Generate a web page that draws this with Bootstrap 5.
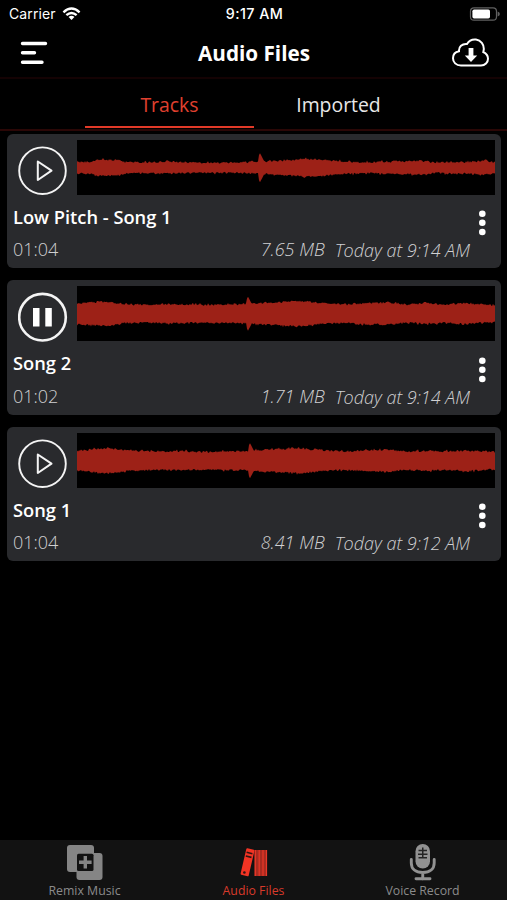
<!DOCTYPE html>
<html lang="en" data-bs-theme="dark">
<head>
<meta charset="utf-8">
<meta name="viewport" content="width=device-width, initial-scale=1">
<title>Audio Files</title>
<link href="https://cdn.jsdelivr.net/npm/bootstrap@5.3.0/dist/css/bootstrap.min.css" rel="stylesheet">
<style>
body{background:#000;color:#fff;font-family:"Open Sans",sans-serif;height:900px;overflow:hidden}
svg{display:block;flex:none}
.status{height:27px;font:14px/27px Inter,sans-serif;padding:0 7px 0 9px}
.status .clock{font-weight:500;font-size:14.3px;letter-spacing:.45px}
.status .carrier{letter-spacing:.1px}
.status .carrier span{margin-right:6px}
.status>*{flex:1 1 0}
.topbar{height:52px;padding:2px 17px 0 20px;border-bottom:2px solid #140203}
.topbar h1{font-size:20.7px;font-weight:700;line-height:48px}
.tabs{height:51.5px;padding:0 84px 0 85px;border-bottom:2px solid #2b0706}
.tabs a{font-size:19.4px;line-height:52.5px;height:49px;flex:1 1 0;color:#e8e8e8;border-bottom:2.5px solid transparent}
.tabs a.active{color:#e0402f;border-color:#e23a28}
.tracks{padding:3.2px 6px 0 7px}
.track{height:134.4px;margin-bottom:12.2px;background:#292a2d;border:0;border-radius:6px;padding:6.2px 6px 0}
.play{width:64px;height:55px}
.play svg{margin:6px 0 0 5px}
.wave{width:418px;height:55px;background:#000}
.info{padding-top:9.8px}
.name{font-size:18.3px;font-weight:600;line-height:24px;margin-bottom:8.6px}
.meta{font-size:18px;font-weight:300;line-height:24px;color:#d0d0d2;margin-right:-1px}
.meta .when{margin-left:10px;position:relative;top:1px}
.menu{width:26px;padding:5.6px 0 0 9px}
.bottombar{height:60px;background:#121212}
.bottombar a{flex:1 1 0;font-size:12.3px;line-height:16px;color:#8b8b8b}
.bottombar a.active{color:#d93a2b}
.bottombar svg{margin:4px auto 2px}
</style>
</head>
<body class="d-flex flex-column">
<div class="status d-flex">
  <div class="carrier d-flex align-items-center"><span>Carrier</span>
    <svg width="19" height="14" viewBox="0 0 20 14" fill="none" stroke="#fff" stroke-width="2.5"><path d="M1.500 5.200Q10-2.600 18.500 5.200M4.600 8.300Q10 3.400 15.400 8.300"/><path d="M6.900 10.200Q10 7.600 13.100 10.200L10 13.400Z" fill="#fff" stroke="none"/></svg>
  </div>
  <div class="clock text-center">9:17 AM</div>
  <div class="d-flex align-items-center justify-content-end">
    <svg width="31" height="14" viewBox="0 0 31 14"><rect x="1.500" y=".8" width="26" height="12.400" rx="3.500" fill="none" stroke="#606060" stroke-width="1.200"/><rect x="3.400" y="2.500" width="17.600" height="9" rx="1.700" fill="#fff"/><path d="M28.600 4.600q2.300.7 2.300 2.400T28.600 9.400z" fill="#606060"/></svg>
  </div>
</div>
<header class="topbar d-flex justify-content-between align-items-center">
  <svg width="37" height="24" viewBox="0 0 37 24" stroke="#fff" stroke-width="3.400" stroke-linecap="round"><path d="M2.500 2.500H25.500M2.500 11.700H14.500M2.500 21.200H22"/></svg>
  <h1 class="m-0">Audio Files</h1>
  <svg width="39" height="30" viewBox="0 0 39 30" fill="none" stroke="#fff" stroke-width="2"><path d="M10 27.500C5 27.500 2 24.200 2 20.200C2 16.500 4.500 13.800 8 13.200C7.600 9 11 5.500 16 6C18 2.700 21.300 1.200 25 1.600C30 2.200 33 6.300 32.800 11.200C32.700 12.200 32.600 13.200 32.300 14C35.500 15.500 37 18 37 20.700C37 24.500 34 27.500 30 27.500Z"/><path d="M17.600 10h4.800v7.500h3.800l-6.200 6.500l-6.200-6.500h3.800z" fill="#fff" stroke="none"/></svg>
</header>
<nav class="tabs d-flex text-center">
  <a class="active text-decoration-none">Tracks</a>
  <a class="text-decoration-none">Imported</a>
</nav>
<main class="tracks flex-grow-1" id="tracks"></main>
<nav class="bottombar d-flex text-center">
  <a class="text-decoration-none">
    <svg width="38" height="37" viewBox="0 0 38 37" fill="#858585"><rect x="1" y="1" width="27" height="27" rx="3"/><rect x="10.500" y="9" width="26" height="27" rx="3"/><rect x="11" y="9.700" width="16.500" height="17.300" rx="1.500" fill="#121212"/><path d="M17.600 12h3.400v4.600h4.600v3.400h-4.600v4.600h-3.400v-4.600h-4.600v-3.400h4.600z"/></svg>Remix Music</a>
  <a class="active text-decoration-none">
    <svg width="30" height="37" viewBox="0 0 30 37"><path d="M8.500 4.200L14.800 5.700Q15.600 6 15.400 7L9.700 31.500Q9.400 32.600 8.500 32.300L2.200 30.800Q1.400 30.500 1.600 29.500L7.300 5Q7.600 4 8.500 4.200Z" fill="#f33424"/><path d="M7.600 8.300l5.800 1.500M6.800 12l5.700 1.400" stroke="#301412" stroke-width="1.600"/><circle cx="5.400" cy="28.500" r="1.300" fill="#301412"/><path d="M15.500 6H28V32H15.500Z" fill="#a92b20"/><path d="M16.300 6v26M20.200 6v26M24 6v26M27.500 6v26" stroke="#e83828" stroke-width="1.200"/></svg>Audio Files</a>
  <a class="text-decoration-none">
    <svg width="28" height="37" viewBox="0 0 28 37"><rect x="6.500" y="0" width="14.500" height="24.500" rx="7.200" fill="#929292"/><path d="M9.500 6.500h3.500M14.500 6.500h3.500M9 10.200h4M14.500 10.200h4M9.500 13.800h3.500M14.500 13.800h3.500M13.750 3.500v11" stroke="#242424" stroke-width="1.500"/><path d="M2.300 15.500v3.500C2.300 25 6.500 28.500 13.750 28.500S25.200 25 25.200 19V15.500M13.750 29v6M7 34.800h14" fill="none" stroke="#929292" stroke-width="2.900" stroke-linecap="round"/></svg>Voice Record</a>
</nav>
<script src="https://cdn.jsdelivr.net/npm/bootstrap@5.3.0/dist/js/bootstrap.bundle.min.js"></script>
<script>
// envelope: pairs of [x, half height] along the 418px wide waveform
const tracks = [
  {name:'Low Pitch - Song 1', time:'01:04', size:'7.65 MB', when:'Today at 9:14 AM', mid:27.7, spike:183, peak:14.5,
   env:[[0,5.5],[14,6],[22,8],[35,7.5],[40,8],[48,5.7],[75,5.3],[87,6],[105,5.5],[125,5],[160,5],[182,6],[195,6.3],[215,8],[237,8.7],[255,7],[270,6],[290,5.3],[320,6.3],[345,6.7],[360,5],[375,6],[390,5.5],[405,7],[418,5.5]]},
  {name:'Song 2', time:'01:02', size:'1.71 MB', when:'Today at 9:14 AM', paused:true, mid:27.7, spike:171, peak:17,
   env:[[0,10],[15,11.5],[32,12],[45,9.5],[70,9],[98,9.5],[130,8.7],[170,9.7],[190,11],[221,12.5],[240,10.7],[269,9],[280,10],[310,11],[330,9],[350,10],[365,9],[390,10.3],[418,8]]},
  {name:'Song 1', time:'01:04', size:'8.41 MB', when:'Today at 9:12 AM', mid:27.7, spike:173, peak:17.5,
   env:[[0,9.5],[15,11],[23,12.3],[37,12],[50,10],[80,9],[105,9.5],[130,8.7],[170,9.7],[190,11],[221,12.5],[240,10.7],[269,9],[285,10],[310,11],[330,9],[350,10],[365,9],[390,10.3],[418,8.7]]}
];
function wavePath(t, seed){
  let s = seed * 7919;
  const rnd = () => (s = (s * 16807) % 2147483647) / 2147483647;
  const amp = x => {
    let i = 1;
    while (i < t.env.length - 1 && t.env[i][0] < x) i++;
    const [x0,a0] = t.env[i-1], [x1,a1] = t.env[i];
    let a = a0 + (a1 - a0) * (x - x0) / (x1 - x0) + (rnd() - .5) * 1.9 + (rnd() > .88 ? 1 : 0);
    const d = x - t.spike;
    if (d >= -1 && d < 6) a = Math.max(a, t.peak - Math.abs(d) * 1.9);
    return a;
  };
  const up = [], down = [];
  for (let x = 0; x <= 418; x++){
    up.push(x + ' ' + (t.mid - amp(x)).toFixed(2));
    down.unshift(x + ' ' + (t.mid + amp(x)).toFixed(2));
  }
  return 'M' + up.join('L') + 'L' + down.join('L') + 'Z';
}
document.getElementById('tracks').innerHTML = tracks.map((t, i) => `
<div class="card track">
  <div class="d-flex">
    <div class="play"><svg width="50" height="50" viewBox="0 0 50 50" fill="none" stroke="#f4f4f4">${t.paused
      ? '<circle cx="24.500" cy="25.200" r="23.300" stroke-width="2.600"/><path d="M15 16h6.500v18.500H15zM27.300 16h6.500v18.500h-6.500z" fill="#fff" stroke="none"/>'
      : '<circle cx="24.500" cy="24.700" r="23.300" stroke-width="1.900"/><path d="M19.800 15.500L33.500 24.700L19.800 34Z" stroke-width="2" stroke-linejoin="round"/>'}</svg></div>
    <svg class="wave" viewBox="0 0 418 55"><path d="${wavePath(t, 917 + i * 331)}" fill="#9d2117"/></svg>
  </div>
  <div class="info d-flex">
    <div class="flex-grow-1">
      <div class="name">${t.name}</div>
      <div class="meta d-flex"><span>${t.time}</span><em class="ms-auto">${t.size}</em><em class="when">${t.when}</em></div>
    </div>
    <div class="menu"><svg width="8" height="26" viewBox="0 0 8 26" fill="#fff"><circle cx="4.300" cy="3.700" r="3.300"/><circle cx="4.300" cy="12.800" r="3.300"/><circle cx="4.300" cy="22" r="3.300"/></svg></div>
  </div>
</div>`).join('');
</script>
</body>
</html>
